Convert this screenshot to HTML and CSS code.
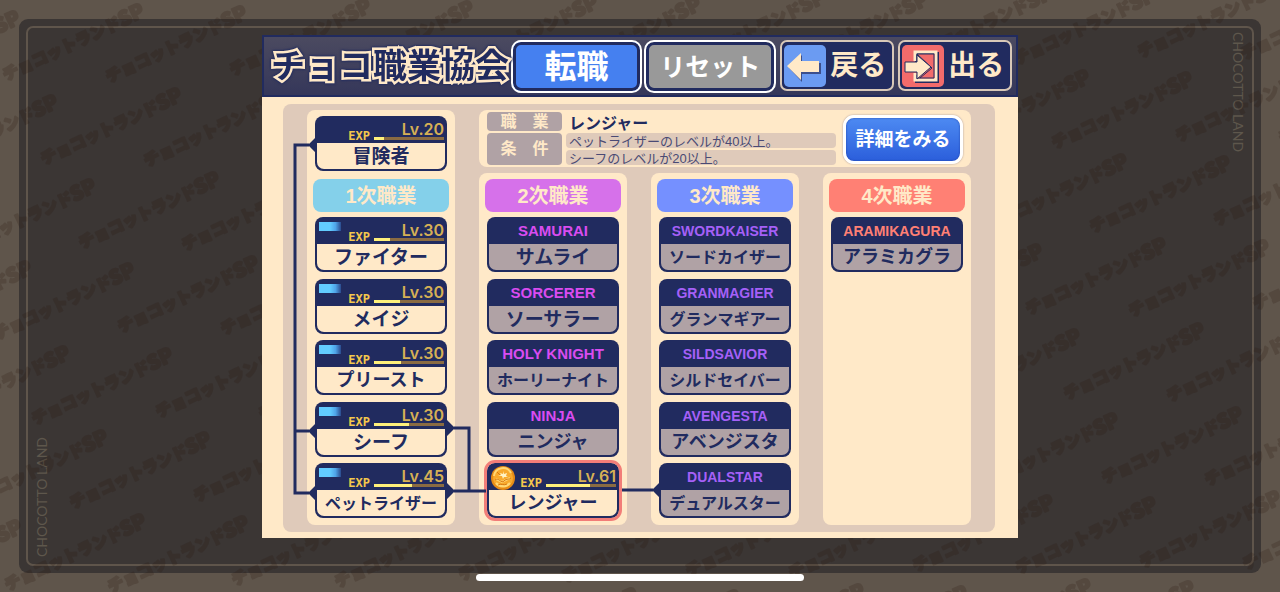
FILE: index.html
```html
<!doctype html>
<html lang="ja">

<head>
    <meta charset="UTF-8" />
    <meta name="viewport" content="width=device-width, initial-scale=1.0" />
    <title>チョコ職業協会</title>
    <link rel="stylesheet" href="styles.css">
</head>

<body>
    <main class="frame">
        <span class="brand brand--left">CHOCOTTO LAND</span>
        <span class="brand brand--right">CHOCOTTO LAND</span>
        <div class="panel">
            <header class="header">
                <h1 class="heading">チョコ職業協会</h1>
                <button class="tab tab--selected">転職</button>
                <button class="tab">リセット</button>
                <button class="nav">
                    <svg class="nav__icon nav__icon--back" viewBox="0 0 42 42" aria-hidden="true">
                        <path fill="#3c4f8c" d="M5 23 18 10v8h19v11H18v8z" />
                        <path fill="#ffe9c8" d="M3 21 17 8v8h18v11H17v8z" />
                    </svg>
                    戻る
                </button>
                <button class="nav">
                    <svg class="nav__icon nav__icon--exit" viewBox="0 0 42 42" aria-hidden="true">
                        <path fill="none" stroke="#232c60" stroke-width="2" d="M14 17V8h22v29H14v-7" />
                        <path fill="none" stroke="#ffe9c8" stroke-width="3" d="M13 16V7h21v28H13v-7" />
                        <path fill="none" stroke="#232c60" stroke-width="1" d="M15 16V9h17v24H15M15 9l15 14-12 10" />
                        <path fill="#ffe9c8" stroke="#232c60" stroke-width="1" d="M3 17h12v-7l14 12-14 12v-7H3z" />
                    </svg>
                    出る
                </button>
            </header>

            <div class="content">
                <div class="board">
                    <section class="column column--first">
                        <button class="job job--open">
                            <span class="job__top"><span class="exp">EXP</span><span class="level">Lv.20</span><span class="bar"><span class="bar__fill" style="width: 14%"></span></span></span>
                            <span class="job__name">冒険者</span>
                        </button>
                        <h2 class="rank rank--1">1次職業</h2>
                        <div class="jobs">
                            <button class="job job--open">
                                <span class="job__top"><span class="chip"></span><span class="exp">EXP</span><span class="level">Lv.30</span><span class="bar"><span class="bar__fill" style="width: 23%"></span></span></span>
                                <span class="job__name">ファイター</span>
                            </button>
                            <button class="job job--open">
                                <span class="job__top"><span class="chip"></span><span class="exp">EXP</span><span class="level">Lv.30</span><span class="bar"><span class="bar__fill" style="width: 37%"></span></span></span>
                                <span class="job__name">メイジ</span>
                            </button>
                            <button class="job job--open">
                                <span class="job__top"><span class="chip"></span><span class="exp">EXP</span><span class="level">Lv.30</span><span class="bar"><span class="bar__fill" style="width: 39%"></span></span></span>
                                <span class="job__name job__name--mid">プリースト</span>
                            </button>
                            <button class="job job--open">
                                <span class="job__top"><span class="chip"></span><span class="exp">EXP</span><span class="level">Lv.30</span><span class="bar"><span class="bar__fill" style="width: 50%"></span></span></span>
                                <span class="job__name">シーフ</span>
                            </button>
                            <button class="job job--open">
                                <span class="job__top"><span class="chip"></span><span class="exp">EXP</span><span class="level">Lv.45</span><span class="bar"><span class="bar__fill" style="width: 54%"></span></span></span>
                                <span class="job__name job__name--long">ペットライザー</span>
                            </button>
                        </div>
                    </section>

                    <section class="info">
                        <dl class="info__list">
                            <dt>職　業</dt>
                            <dd class="info__name">レンジャー</dd>
                            <dt>条　件</dt>
                            <dd class="info__terms">
                                <p>ペットライザーのレベルが40以上。</p>
                                <p>シーフのレベルが20以上。</p>
                            </dd>
                        </dl>
                        <button class="details">詳細をみる</button>
                    </section>

                    <section class="column column--2">
                        <h2 class="rank rank--2">2次職業</h2>
                        <div class="jobs">
                            <button class="job"><span class="job__top">SAMURAI</span><span class="job__name">サムライ</span></button>
                            <button class="job"><span class="job__top">SORCERER</span><span class="job__name">ソーサラー</span></button>
                            <button class="job"><span class="job__top">HOLY KNIGHT</span><span class="job__name job__name--long">ホーリーナイト</span></button>
                            <button class="job"><span class="job__top">NINJA</span><span class="job__name job__name--mid">ニンジャ</span></button>
                            <button class="job job--open job--selected">
                                <span class="job__top">
                                    <svg class="coin" viewBox="0 0 24 24" aria-hidden="true">
                                        <circle cx="12" cy="12" r="12" fill="#e58a16" />
                                        <circle cx="12" cy="12" r="10" fill="#f8a92c" />
                                        <path fill="none" stroke="#ffd774" stroke-width="2" d="M3 10a9 9 0 0 1 17-3M5 17a9 9 0 0 0 14 0M5 13l6 3 8-4" />
                                        <path fill="none" stroke="#d67a12" stroke-width="1" d="M4 14c4-3 6 4 9 1s5-1 7-3M7 19c3-2 6 1 9-1M6 6l3 3" />
                                        <path fill="#fff3c4" d="m12 5 1 3 3-1-1 3 2 1-4 0-1 2-1-3-4 0 3-1-1-2 3 1z" />
                                    </svg>
                                    <span class="exp">EXP</span><span class="level">Lv.61</span><span class="bar"><span class="bar__fill" style="width: 63%"></span></span></span>
                                <span class="job__name job__name--mid">レンジャー</span>
                            </button>
                        </div>
                    </section>

                    <section class="column column--3">
                        <h2 class="rank rank--3">3次職業</h2>
                        <div class="jobs">
                            <button class="job"><span class="job__top">SWORDKAISER</span><span class="job__name job__name--long">ソードカイザー</span></button>
                            <button class="job"><span class="job__top">GRANMAGIER</span><span class="job__name job__name--long">グランマギアー</span></button>
                            <button class="job"><span class="job__top">SILDSAVIOR</span><span class="job__name job__name--long">シルドセイバー</span></button>
                            <button class="job"><span class="job__top">AVENGESTA</span><span class="job__name job__name--mid">アベンジスタ</span></button>
                            <button class="job"><span class="job__top">DUALSTAR</span><span class="job__name job__name--long">デュアルスター</span></button>
                        </div>
                    </section>

                    <section class="column column--4">
                        <h2 class="rank rank--4">4次職業</h2>
                        <div class="jobs">
                            <button class="job"><span class="job__top">ARAMIKAGURA</span><span class="job__name job__name--mid">アラミカグラ</span></button>
                        </div>
                    </section>

                    <!-- lines between a job and the jobs it unlocks -->
                    <svg class="links" viewBox="0 0 712 428" aria-hidden="true">
                        <path class="links__line" d="M32 41H12V389H32M12 327H32M165 324H186V387M165 387H203M339 386H376" />
                        <path class="links__node" d="M33 33l-6 6v4l6 6zM33 319l-6 6v4l6 6zM33 381l-6 6v4l6 6zM164 316l6 6v4l-6 6zM164 379l6 6v4l-6 6zM377 378l-6 6v4l6 6z" />
                    </svg>
                </div>
            </div>
        </div>
    </main>
    <svg class="pattern" aria-hidden="true">
        <defs>
            <g id="stamp">
                <text transform="rotate(-25)">チョコットランド<tspan class="pattern__sp">SP</tspan></text>
            </g>
            <g id="pair">
                <use href="#stamp" />
                <use href="#stamp" x="103" y="2" />
            </g>
            <g id="row">
                <use href="#pair" x="-681" y="14" />
                <use href="#pair" x="-454" y="9" />
                <use href="#pair" x="-227" y="5" />
                <use href="#pair" />
                <use href="#pair" x="227" y="-5" />
                <use href="#pair" x="454" y="-9" />
                <use href="#pair" x="681" y="-14" />
                <use href="#pair" x="908" y="-18" />
                <use href="#pair" x="1135" y="-23" />
            </g>
        </defs>
        <use href="#row" x="6" y="81" />
        <use href="#row" x="44" y="165" />
        <use href="#row" x="82" y="249" />
        <use href="#row" x="121" y="333" />
        <use href="#row" x="159" y="418" />
        <use href="#row" x="197" y="502" />
        <use href="#row" x="235" y="586" />
        <use href="#row" x="273" y="670" />
    </svg>
    <div class="home-indicator"></div>
</body>

</html>
```
FILE: styles.css
```css
:root {
    --navy: #212b5f;
    --cream: #ffe9c8;
    --rose: #dfcaba;
    --mauve: #b0a2a5;
    --brown: #5f554b;
    --gold: #d6b055;
    --red: #f27d78;
}

* {
    margin: 0;
    padding: 0;
    box-sizing: border-box;
}

body {
    position: relative;
    min-height: 100vh;
    padding: 19px;
    overflow: hidden;
    background: var(--brown);
    border-bottom: 1px solid #cfc9c2;
    font-family: 'Liberation Sans', 'Noto Sans CJK JP', sans-serif;
    color: var(--navy);
}

button {
    border: 0;
    background: none;
    font: inherit;
    color: inherit;
    cursor: pointer;
}

.frame {
    position: relative;
    padding: 16px 0 35px;
    border-radius: 9px;
    background: #3b3634;
}

.frame::before {
    content: '';
    position: absolute;
    inset: 7px;
    border: 2px solid var(--brown);
    border-radius: 7px;
}

.brand {
    position: absolute;
    writing-mode: vertical-rl;
    font-family: Lato, sans-serif;
    font-size: 14px;
    line-height: 16px;
    color: #5e574c;
}

.brand--left {
    left: 15px;
    bottom: 16px;
    transform: rotate(180deg);
}

.brand--right {
    right: 15px;
    top: 13px;
}

.pattern {
    position: absolute;
    inset: 0;
    width: 100%;
    height: 100%;
    font: 900 16px 'Noto Sans CJK JP', sans-serif;
    fill: #2a160e;
    stroke: #2a160e;
    stroke-width: 2px;
    stroke-linejoin: round;
    opacity: 0.2;
}

.pattern__sp {
    font-size: 20px;
}

.panel {
    position: relative;
    z-index: 1;
    width: 756px;
    margin: 0 auto;
    background: var(--cream);
}

.header {
    display: flex;
    align-items: flex-start;
    height: 62px;
    padding: 3px 4px 0 7px;
    border: 2px solid var(--navy);
    background: linear-gradient(#4b4a60, #35375a);
}

.heading {
    width: 240px;
    font-size: 34px;
    line-height: 52px;
    font-weight: bold;
    white-space: nowrap;
    -webkit-text-stroke: 5px var(--cream);
    paint-order: stroke fill;
    filter: drop-shadow(0 0 1px var(--navy)) drop-shadow(0 0 1px var(--navy));
}

.tab {
    width: 132px;
    height: 53px;
    margin-right: 2px;
    border: 2px solid white;
    border-radius: 10px;
    background: #999;
    box-shadow: inset 0 0 0 3px var(--navy);
    font-size: 25px;
    line-height: 48px;
    font-weight: bold;
    color: white;
    white-space: nowrap;
}

.tab--selected {
    background: #4580f0;
    font-size: 32px;
}

.nav {
    display: flex;
    align-items: center;
    gap: 4px;
    width: 114px;
    height: 51px;
    margin-left: 2px;
    padding-left: 2px;
    border: 2px solid #d8c8b8;
    border-radius: 7px;
    background: var(--navy);
    font-size: 28px;
    line-height: 44px;
    font-weight: bold;
    color: var(--cream);
    white-space: nowrap;
}

.nav+.nav {
    margin-left: 4px;
}

.nav__icon {
    flex: none;
    width: 42px;
    height: 42px;
    border-radius: 5px;
}

.nav__icon--back {
    background: #6b9bf2;
}

.nav__icon--exit {
    background: #f26b6b;
}

.content {
    padding: 7px 23px 6px 21px;
}

.board {
    position: relative;
    display: grid;
    grid-template-columns: repeat(4, 1fr);
    grid-template-rows: 57px auto;
    gap: 6px 24px;
    padding: 6px 24px 7px;
    border-radius: 8px;
    background: var(--rose);
}

.column {
    padding: 6px 6px 7px;
    border-radius: 8px;
    background: var(--cream);
}

.column--first {
    grid-row: span 2;
}

.column--first>.job {
    width: calc(100% - 4px);
    margin: 0 2px 8px;
}

.rank {
    height: 33px;
    margin-bottom: 5px;
    border-radius: 8px;
    font-size: 20px;
    line-height: 34px;
    font-weight: bold;
    text-align: center;
    color: var(--cream);
}

.rank--1 {
    background: #84d0ea;
}

.rank--2 {
    background: #d671ea;
}

.rank--3 {
    background: #7590ff;
}

.rank--4 {
    background: #ff8074;
}

.jobs {
    display: flex;
    flex-direction: column;
    justify-content: space-between;
    gap: 6px;
    min-height: 301px;
    padding: 0 2px;
}

.column--4 .jobs {
    justify-content: flex-start;
}

.job {
    display: flex;
    flex-direction: column;
    height: 55px;
    padding: 0 2px 2px;
    border-radius: 8px;
    background: var(--navy);
    font-weight: bold;
}

.job__top {
    position: relative;
    display: block;
    width: 100%;
    height: 27px;
    font-size: 14px;
    line-height: 28px;
    text-align: center;
    white-space: nowrap;
}

.column--2 .job__top {
    font-size: 15px;
    color: #d94cf0;
}

.column--3 .job__top {
    color: #a560f8;
}

.column--4 .job__top {
    color: #ff8074;
}

.job__name {
    width: 100%;
    height: 26px;
    border-radius: 0 0 7px 7px;
    background: var(--mauve);
    font-size: 19px;
    line-height: 27px;
    white-space: nowrap;
}

.job__name--mid {
    font-size: 18px;
}

.job__name--long {
    font-size: 16px;
}

.job--open .job__name {
    background: var(--cream);
}

.job--open .job__top {
    display: grid;
    grid-template-columns: 1fr 70px;
    grid-template-rows: 21px 3px;
    column-gap: 4px;
    padding-right: 1px;
}

.job--selected {
    outline: 3px solid var(--red);
}

/* class mark and coin sit over the corner of the card */
.chip,
.coin {
    position: absolute;
    left: 2px;
    top: 5px;
    width: 22px;
    height: 9px;
    background: linear-gradient(90deg, #62ccff 50%, #4fa4e8 75%, #2b4a8c);
}

.coin {
    top: 3px;
    width: 24px;
    height: 24px;
    background: none;
}

.exp {
    grid-row: span 2;
    align-self: end;
    font-family: 'DejaVu Sans Mono', monospace;
    font-size: 12px;
    line-height: 8px;
    text-align: right;
    color: #f5c84c;
}

.level {
    font-family: Inter, sans-serif;
    font-size: 16px;
    line-height: 27px;
    font-weight: 600;
    text-align: right;
    color: var(--gold);
}

.bar {
    grid-column: 2;
    height: 3px;
    background: #8a6b42;
}

.bar__fill {
    display: block;
    height: 3px;
    background: #fff07a;
}

.info {
    display: flex;
    grid-column: 2 / -1;
    gap: 7px;
    padding: 2px 8px;
    border-radius: 8px;
    background: var(--cream);
}

.info__list {
    display: grid;
    flex: 1;
    grid-template-columns: 75px 1fr;
    grid-template-rows: 19px 32px;
    gap: 2px 4px;
}

.info dt {
    display: flex;
    align-items: center;
    justify-content: center;
    border-radius: 4px;
    background: var(--mauve);
    font-size: 16px;
    line-height: 18px;
    font-weight: bold;
    color: var(--cream);
}

.info__name {
    padding-left: 3px;
    font-size: 16px;
    line-height: 23px;
    font-weight: bold;
}

.info__terms {
    display: grid;
    gap: 2px;
}

.info__terms p {
    height: 15px;
    padding-left: 3px;
    border-radius: 4px;
    background: var(--rose);
    font-size: 13px;
    line-height: 17px;
    color: #4a4a74;
    white-space: nowrap;
}

.details {
    width: 120px;
    height: 49px;
    margin-top: 3px;
    border: 3px solid white;
    border-radius: 11px;
    background: linear-gradient(#4d8af2, #2b5edb);
    box-shadow: 0 0 2px #9a8f9a, inset 0 0 2px #1f3fa0;
    font-size: 19px;
    line-height: 40px;
    font-weight: bold;
    color: white;
    white-space: nowrap;
}

.links {
    position: absolute;
    left: 0;
    top: 0;
    width: 712px;
    height: 428px;
    pointer-events: none;
}

.links__line {
    fill: none;
    stroke: var(--navy);
    stroke-width: 3px;
}

.links__node {
    fill: var(--navy);
}

.home-indicator {
    position: absolute;
    z-index: 2;
    left: 50%;
    bottom: 11px;
    width: 328px;
    height: 7px;
    margin-left: -164px;
    border-radius: 4px;
    background: white;
}
```
